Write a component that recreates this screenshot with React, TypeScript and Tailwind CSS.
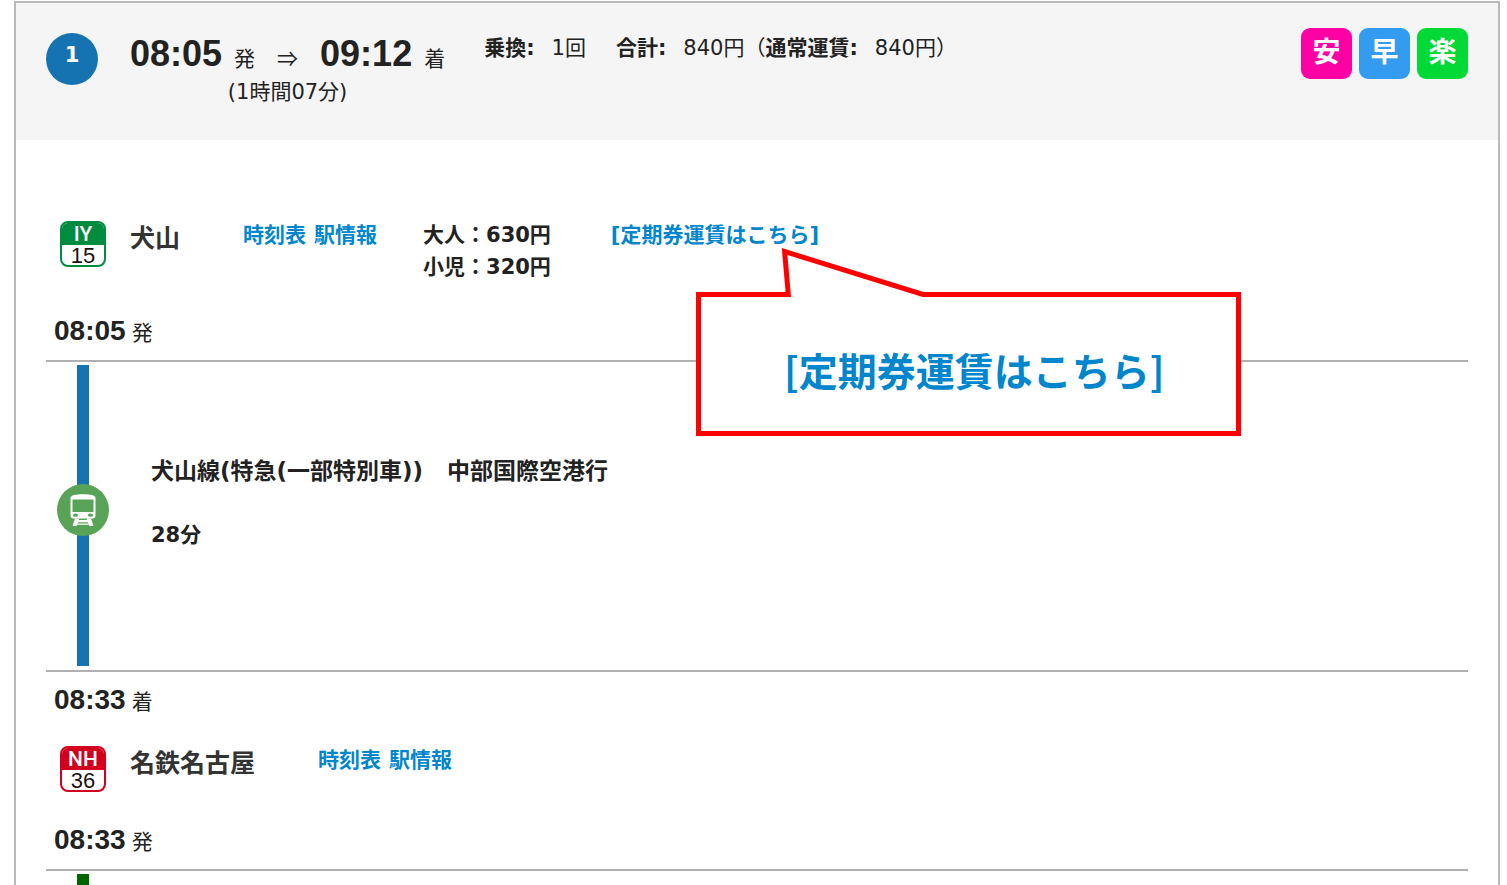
import React from 'react';
import { clsx } from 'clsx';

interface StationData {
  code: string;
  number: string;
  name: string;
  color: 'green' | 'red';
}

const stations: Record<'inuyama' | 'nagoya', StationData> = {
  inuyama: { code: 'IY', number: '15', name: '犬山', color: 'green' },
  nagoya: { code: 'NH', number: '36', name: '名鉄名古屋', color: 'red' },
};

const badges = [
  { label: '安', className: 'bg-[#ff00a5]' },
  { label: '早', className: 'bg-[#339cf0]' },
  { label: '楽', className: 'bg-[#00d936]' },
];

export default function App() {
  return (
    <main className="flex min-h-screen flex-col bg-white pt-px pr-[7px] pl-[14px] font-['DejaVu_Sans','Noto_Sans_CJK_JP',sans-serif] text-[21px] text-[#222]">
      <article className="flex flex-1 flex-col border-2 border-b-0 border-[#b9bbb9]">
        <RouteHeader />

        <div className="flex flex-1 flex-col px-[30px] pt-[79px]">
          <StationRow station={stations.inuyama}>
            <dl className="ml-[46px] font-bold leading-8">
              <FareLine label="大人" value="630円" />
              <FareLine label="小児" value="320円" />
            </dl>
            <PassFare />
          </StationRow>
          <div className="pt-[29px] pb-[10px]">
            <StopTime time="08:05" suffix="発" />
          </div>

          <RideSegment />

          <div className="pt-[9px] pb-[25px]">
            <StopTime time="08:33" suffix="着" />
          </div>
          <StationRow station={stations.nagoya} />
          <div className="pt-[29px] pb-[10px]">
            <StopTime time="08:33" suffix="発" />
          </div>

          {/* Next ride starts here */}
          <div className="flex flex-1 border-t-2 border-[#b0b0b0] pt-[3px] pl-[31px]">
            <div className="min-h-2 w-3 bg-[#006400]" />
          </div>
        </div>
      </article>
    </main>
  );
}

function RouteHeader() {
  return (
    <header className="flex items-start bg-[#f5f5f5] px-[30px] pt-[25px] pb-8">
      <div className="mt-[5px] size-[52px] shrink-0 rounded-full bg-[#1673b1] text-center font-bold leading-[45px] text-white">
        1
      </div>

      <div className="mt-[5px] ml-8 text-center">
        <div className="flex h-[43px] items-baseline leading-[42px]">
          <BigTime>08:05</BigTime>
          <span className="ml-3">発</span>
          <span className="mx-[22px] font-['Noto_Sans_CJK_JP',sans-serif]">⇒</span>
          <BigTime>09:12</BigTime>
          <span className="ml-3">着</span>
        </div>
        <div className="leading-8">(1時間07分)</div>
      </div>

      <p className="mt-1 ml-[39px] flex leading-8">
        <b>乗換:</b>
        <span className="ml-[17px]">1回</span>
        <b className="ml-[30px]">合計:</b>
        <span className="ml-[17px]">840円</span>
        <span>（</span>
        <b>通常運賃:</b>
        <span className="ml-[17px]">840円</span>
        <span>）</span>
      </p>

      <ul className="ml-auto flex gap-[7px]">
        {badges.map((badge) => (
          <li
            key={badge.label}
            className={clsx(
              'size-[51px] rounded-[9px] text-center text-[28px] font-bold leading-[50px] text-white',
              badge.className
            )}
          >
            {badge.label}
          </li>
        ))}
      </ul>
    </header>
  );
}

function BigTime({ children }: { children: React.ReactNode }) {
  return (
    <time className="font-['Liberation_Sans',sans-serif] text-[36px] font-bold">{children}</time>
  );
}

function StopTime({ time, suffix }: { time: string; suffix: string }) {
  return (
    <div className="flex h-[38px] items-baseline gap-1.5 pl-2 leading-[38px]">
      <time className="font-['Liberation_Sans',sans-serif] text-[28px] font-bold">{time}</time>
      <span>{suffix}</span>
    </div>
  );
}

function StationNumber({ station }: { station: StationData }) {
  const isGreen = station.color === 'green';

  return (
    <div
      className={clsx(
        'mt-0.5 flex size-[46px] shrink-0 flex-col overflow-hidden rounded-lg border-2 bg-white text-center text-[#1a1311]',
        isGreen ? 'border-[#008c3f]' : 'border-[#d2001e]'
      )}
    >
      <span
        className={clsx(
          'h-[22px] font-[Roboto,sans-serif] text-[21px] font-medium leading-[22px] text-white',
          isGreen ? 'bg-[#008c3f]' : 'bg-[#d2001e]'
        )}
      >
        {station.code}
      </span>
      <span className="font-['Liberation_Sans',sans-serif] text-[22px] leading-[21px]">
        {station.number}
      </span>
    </div>
  );
}

interface StationRowProps {
  station: StationData;
  children?: React.ReactNode;
}

function StationRow({ station, children }: StationRowProps) {
  return (
    <section className="flex items-start pl-[14px]">
      <StationNumber station={station} />
      <h2 className="ml-6 text-[25px] font-bold leading-10 text-[#333]">{station.name}</h2>
      <nav className="ml-[63px] flex gap-2 font-bold leading-8 text-[#0086cd]">
        <a href="#timetable">時刻表</a>
        <a href="#station">駅情報</a>
      </nav>
      {children}
    </section>
  );
}

function FareLine({ label, value }: { label: string; value: string }) {
  return (
    <div className="flex">
      <dt>{label}：</dt>
      <dd>{value}</dd>
    </div>
  );
}

// Commuter pass link with the enlarged callout hanging below it
function PassFare() {
  return (
    <div className="relative ml-[60px] font-bold leading-8 text-[#0086cd]">
      <a href="#pass">[定期券運賃はこちら]</a>
      <div className="absolute top-7 left-[85px] z-10 flex h-[189px] w-[545px] justify-center pt-[45px] pl-3">
        <svg
          className="absolute inset-0"
          width="545"
          height="189"
          viewBox="0 0 545 189"
          fill="#fff"
          stroke="#f00"
          strokeWidth="5"
          aria-hidden="true"
        >
          <path d="M2.5 47.5H92.3L88.6 4.5L227 47.5H542.5V186.5H2.5Z" />
        </svg>
        <a
          href="#pass"
          className="relative font-['Noto_Sans_CJK_JP',sans-serif] text-[39px] leading-[154px] whitespace-nowrap"
        >
          [定期券運賃はこちら]
        </a>
      </div>
    </div>
  );
}

function RideSegment() {
  return (
    <section className="flex border-y-2 border-[#b0b0b0] pt-[3px] pb-1 pl-[11px]">
      <div className="relative flex w-[52px] justify-center">
        <div className="h-[301px] w-3 bg-[#1673b1]" />
        <TrainIcon className="absolute top-[119px] left-0 size-[52px]" />
      </div>
      <div className="ml-[42px] pt-[90px] font-bold">
        <p className="flex gap-6 text-[23px] leading-8">
          <span>犬山線(特急(一部特別車))</span>
          <span>中部国際空港行</span>
        </p>
        <p className="mt-8 leading-8">28分</p>
      </div>
    </section>
  );
}

function TrainIcon({ className }: { className?: string }) {
  return (
    <svg className={className} viewBox="0 0 52 52" aria-hidden="true">
      <circle cx="26" cy="26" r="26" fill="#58a358" />
      <path
        fill="#fff"
        d="M13.500 14C13.500 11.200 19 10.300 26 10.300S38.500 11.200 38.500 14V31Q38.500 34.500 35.500 34.500H16.500Q13.500 34.500 13.500 31Z"
      />
      <path fill="#58a358" d="M15.500 15.500H36.500V28H15.500Z" />
      <ellipse cx="18.500" cy="31.200" rx="2.600" ry="1.600" fill="#58a358" />
      <ellipse cx="33.500" cy="31.200" rx="2.600" ry="1.600" fill="#58a358" />
      <path fill="#fff" d="M18 34.500H22.500L19.500 42H15.500ZM29.500 34.500H34L36.500 42H32.500Z" />
      <path fill="#fff" d="M20 36H32V38.200H20ZM19 39.500H33V40.800H19Z" />
    </svg>
  );
}
